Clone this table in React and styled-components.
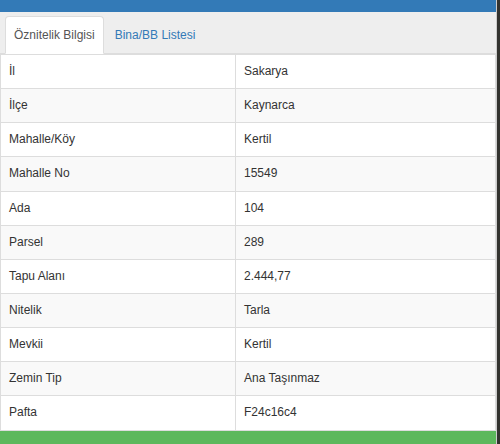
import React from "react";
import styled, { createGlobalStyle } from "styled-components";

const Global = createGlobalStyle`
  html, body { margin: 0; padding: 0; }
  body {
    background: #33332f;
    font-family: "Liberation Sans", Arial, sans-serif;
    font-size: 12px;
    color: #333;
    height: 444px;
    overflow: hidden;
  }
  * { box-sizing: border-box; }
`;

const Panel = styled.div`
  width: 497px;
  height: 444px;
  display: flex;
  flex-direction: column;
  background: #fff;
  border-right: 1px solid #ccc;
`;

const TopBar = styled.div`
  height: 12px;
  background: #337ab7;
  flex-shrink: 0;
`;

const Tabs = styled.ul`
  list-style: none;
  margin: 0;
  padding: 4px 0 0 5px;
  background: #eee;
  display: flex;
  border-bottom: 1px solid #ddd;
  flex-shrink: 0;
`;

const Tab = styled.li`
  margin: 0 2px -1px 0;
  padding: 10px 8px;
  line-height: 16px;
  font-size: 12px;
  color: ${(p) => (p.$active ? "#555" : "#337ab7")};
  background: ${(p) => (p.$active ? "#fff" : "transparent")};
  border: 1px solid ${(p) => (p.$active ? "#ddd" : "transparent")};
  border-bottom-color: transparent;
  border-radius: 4px 4px 0 0;
  cursor: pointer;
`;

const Table = styled.table`
  width: 100%;
  border-collapse: collapse;
  border: 1px solid #ddd;
  flex-shrink: 0;
`;

const Row = styled.tr`
  background: ${(p) => (p.$striped ? "#f9f9f9" : "#fff")};
`;

const Cell = styled.td`
  border: 1px solid #ddd;
  padding: 8px;
  line-height: 17.14px;
  font-size: 12px;
  color: #333;
  vertical-align: top;
  width: ${(p) => p.$w || "auto"};
`;

const Footer = styled.div`
  flex: 1;
  background: #5cb85c;
`;

const rows = [
  ["İl", "Sakarya"],
  ["İlçe", "Kaynarca"],
  ["Mahalle/Köy", "Kertil"],
  ["Mahalle No", "15549"],
  ["Ada", "104"],
  ["Parsel", "289"],
  ["Tapu Alanı", "2.444,77"],
  ["Nitelik", "Tarla"],
  ["Mevkii", "Kertil"],
  ["Zemin Tip", "Ana Taşınmaz"],
  ["Pafta", "F24c16c4"],
];

export default function App() {
  return (
    <>
      <Global />
      <Panel>
        <TopBar />
        <Tabs>
          <Tab $active>Öznitelik Bilgisi</Tab>
          <Tab>Bina/BB Listesi</Tab>
        </Tabs>
        <Table>
          <tbody>
            {rows.map(([k, v], i) => (
              <Row key={k} $striped={i % 2 === 1}>
                <Cell $w="235px">{k}</Cell>
                <Cell>{v}</Cell>
              </Row>
            ))}
          </tbody>
        </Table>
        <Footer />
      </Panel>
    </>
  );
}
